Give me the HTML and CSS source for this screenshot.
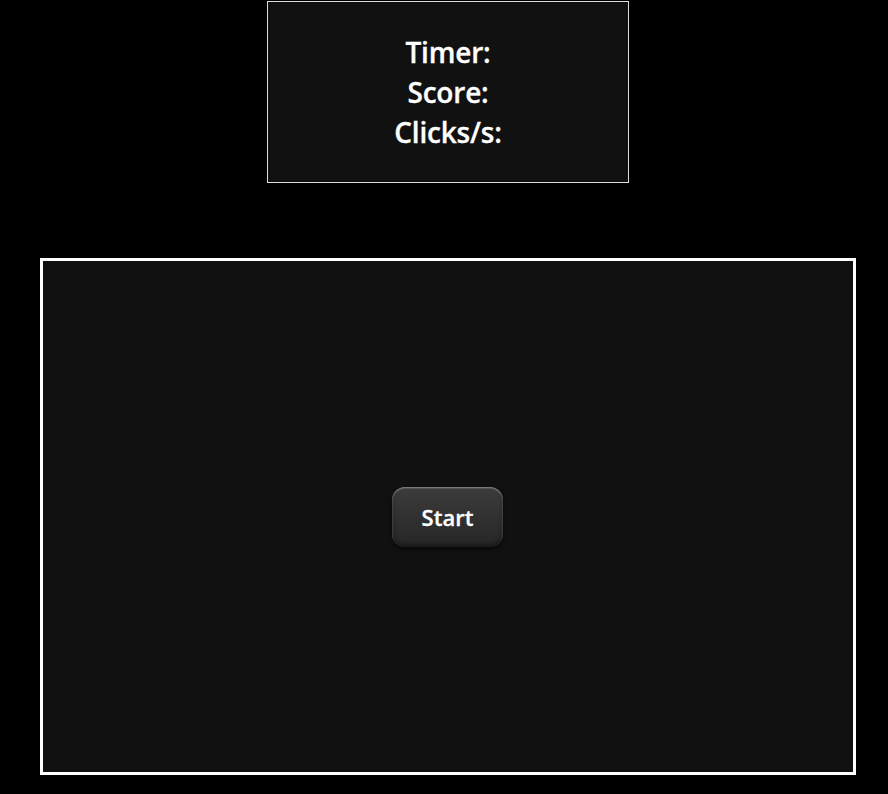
FILE: index.html
```html
<!DOCTYPE html>
<html>
<head>
<meta charset="utf-8">
<link rel="stylesheet" href="styles.css">
</head>
<body>
<div class="page">
  <div class="stats">
    <div class="stat">Timer:</div>
    <div class="stat">Score:</div>
    <div class="stat">Clicks/s:</div>
  </div>
  <div class="arena">
    <button class="start">Start</button>
  </div>
</div>
</body>
</html>
```
FILE: styles.css
```css
html, body {
  margin: 0;
  padding: 0;
  background: #000;
}
body {
  font-family: "Open Sans", "Noto Sans", sans-serif;
  color: #fff;
}
.page {
  width: 816px;
  margin-left: 40px;
  padding-top: 1px;
  display: flex;
  flex-direction: column;
  align-items: center;
}
.stats {
  width: 360px;
  height: 180px;
  border: 1px solid #ddd;
  background: #111;
  display: flex;
  flex-direction: column;
  justify-content: center;
  align-items: center;
  box-sizing: content-box;
}
.stat {
  font-size: 28px;
  font-weight: 600;
  line-height: 40px;
  letter-spacing: -0.2px;
  -webkit-text-stroke: 0.3px #fff;
}
.arena {
  margin-top: 75px;
  width: 810px;
  height: 511px;
  border: 3px solid #fff;
  background: #111;
  display: flex;
  justify-content: center;
  align-items: center;
}
.start {
  width: 111px;
  height: 60px;
  border: none;
  border-radius: 13px;
  background: linear-gradient(#3c3c3c, #262626);
  box-shadow: inset 0 1px 2px rgba(255,255,255,0.45), inset 0 -2px 4px rgba(0,0,0,0.5), 0 2px 4px rgba(0,0,0,0.6);
  color: #fff;
  font-family: "Open Sans", "Noto Sans", sans-serif;
  font-size: 22px;
  font-weight: 600;
  -webkit-text-stroke: 0.3px #fff;
  padding: 0;
  margin-top: 1px;
  margin-left: -1px;
}
```
